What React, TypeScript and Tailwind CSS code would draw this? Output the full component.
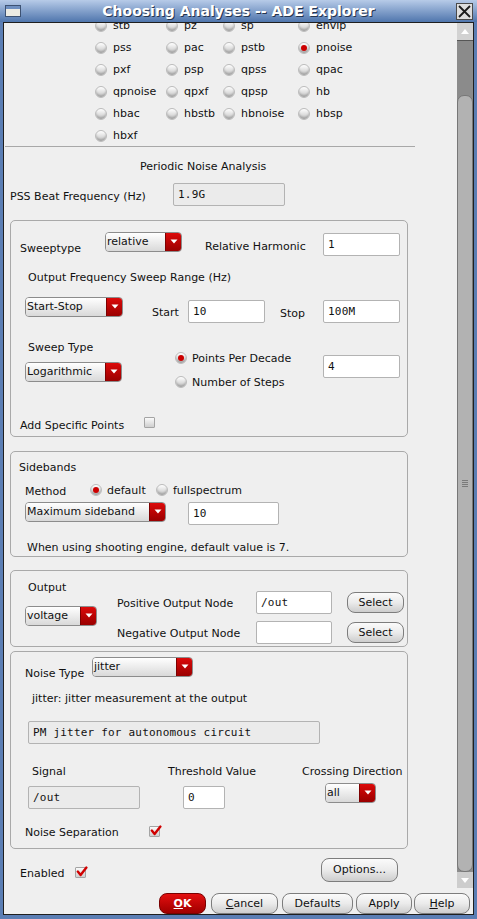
import React from "react";

type Kids = { children?: React.ReactNode; className?: string };

const Radio = ({ on = false }: { on?: boolean }) => (
  <span className="inline-flex h-[12px] w-[12px] shrink-0 items-center justify-center rounded-full border border-[#bcbcbc] bg-linear-to-b from-[#ffffff] to-[#c4c4c4] shadow-[inset_0_-2px_2px_rgba(0,0,0,0.18)]">
    {on && <span className="h-[6px] w-[6px] rounded-full bg-[#cc0000]" />}
  </span>
);

const Check = ({ on = false, className = "" }: { on?: boolean; className?: string }) => (
  <span
    className={`relative inline-block h-[11px] w-[11px] shrink-0 rounded-[1px] border border-[#a4a4a4] bg-linear-to-b from-[#fafafa] to-[#cfcfcf] ${className}`}
  >
    {on && (
      <svg className="absolute -top-[2px] left-0" width="12" height="12" viewBox="0 0 12 12">
        <path
          d="M1.8 5.6 L4.6 9 L10.4 1.6"
          stroke="#d00000"
          strokeWidth="2.4"
          fill="none"
          strokeLinecap="round"
          strokeLinejoin="round"
        />
      </svg>
    )}
  </span>
);

const Combo = ({ value, className = "" }: { value: string; className?: string }) => (
  <div
    className={`flex h-[20px] shrink-0 overflow-hidden rounded-[4px] border border-[#8c8c8c] ${className}`}
  >
    <div className="flex flex-1 items-center bg-linear-to-b from-[#ffffff] to-[#d9d9d9] pl-[1px]">
      {value}
    </div>
    <div className="flex w-[16px] items-center justify-center border-l border-[#7c0000] bg-linear-to-b from-[#dc0a0a] to-[#9a0000]">
      <svg width="8" height="5" viewBox="0 0 8 5" className="-mt-[2px]">
        <path d="M0.5 0.5h7L4 4.5z" fill="#ffffff" />
      </svg>
    </div>
  </div>
);

const Field = ({
  v = "",
  ro = false,
  className = "",
}: {
  v?: string;
  ro?: boolean;
  className?: string;
}) => (
  <div
    className={`flex h-[23px] shrink-0 items-center rounded-[2px] border border-[#b3b3b3] pl-[4px] font-['DejaVu_Sans_Mono',monospace] text-[11px] tracking-[0.2px] ${
      ro ? "bg-[#ebebeb]" : "bg-white"
    } ${className}`}
  >
    {v}
  </div>
);

const Btn = ({ children, className = "" }: Kids) => (
  <div
    className={`flex shrink-0 items-center justify-center rounded-[8px] border border-[#7d7d7d] bg-linear-to-b from-[#fbfbfb] via-[#ebebeb] to-[#cdcdcd] ${className}`}
  >
    {children}
  </div>
);

const Group = ({ children, className = "" }: Kids) => (
  <div className={`ml-[6px] w-[398px] shrink-0 rounded-[5px] border border-[#a9a9a9] ${className}`}>
    {children}
  </div>
);

const analyses = [
  ["stb", "pz", "sp", "envlp"],
  ["pss", "pac", "pstb", "pnoise"],
  ["pxf", "psp", "qpss", "qpac"],
  ["qpnoise", "qpxf", "qpsp", "hb"],
  ["hbac", "hbstb", "hbnoise", "hbsp"],
  ["hbxf"],
];

const Scrollbar = () => (
  <div className="flex w-[16px] shrink-0 flex-col bg-[#8b8b8b]">
    <div className="flex h-[18px] items-center justify-center border-b border-[#565656] bg-[#d2d2d2]">
      <svg width="8" height="5" viewBox="0 0 8 5">
        <path d="M0 5h8L4 0z" fill="#ffffff" />
      </svg>
    </div>
    <div className="h-[54px]" />
    <div className="flex flex-1 items-center justify-center rounded-[7px] border border-[#777777] bg-[#b2b2b2]">
      <div className="flex flex-col gap-[1px]">
        <span className="h-px w-[6px] bg-[#7a7a7a]" />
        <span className="h-px w-[6px] bg-[#7a7a7a]" />
        <span className="h-px w-[6px] bg-[#7a7a7a]" />
        <span className="h-px w-[6px] bg-[#7a7a7a]" />
      </div>
    </div>
    <div className="flex h-[16px] items-center justify-center bg-[#cdcdcd]">
      <svg width="8" height="5" viewBox="0 0 8 5">
        <path d="M0 0h8L4 5z" fill="#ffffff" />
      </svg>
    </div>
  </div>
);

export default function App() {
  return (
    <div className="flex h-[919px] w-[477px] flex-col overflow-hidden bg-[#5b7eb4] font-['DejaVu_Sans',sans-serif] text-[11px] leading-[14px] text-[#111111]">
      {/* title bar */}
      <div className="flex h-[22px] shrink-0 items-center bg-linear-to-b from-[#b7cbe8] to-[#5076ad]">
        <div className="ml-[5px] flex h-[12px] w-[16px] flex-col border border-[#3d5273] bg-[#ecebe3]">
          <span className="h-[3px] bg-[#6e8fc0]" />
        </div>
        <div className="flex-1 text-center text-[14px] font-bold leading-[22px] text-white [text-shadow:1px_1px_0_#26354f]">
          Choosing Analyses -- ADE Explorer
        </div>
        <div className="mr-[4px] flex h-[17px] w-[17px] items-center justify-center border border-[#4a4a4a] bg-[#dedede]">
          <svg width="13" height="13" viewBox="0 0 13 13">
            <path d="M1 1L12 12M12 1L1 12" stroke="#1c1c1c" strokeWidth="1.8" />
          </svg>
        </div>
      </div>

      {/* client area */}
      <div className="mx-[3px] mb-[4px] flex min-h-0 flex-1 flex-col border border-[#1f1f1f] bg-[#efefef]">
        <div className="flex min-h-0 flex-1">
          <div className="min-w-0 flex-1 overflow-hidden">
            <div className="-mt-[9px] flex flex-col">
              <div className="grid auto-rows-[22px] grid-cols-[71px_57px_75px_100px] pl-[91px]">
                {analyses.flat().map((a) => (
                  <div key={a} className="flex items-center gap-[6px] pt-[2px]">
                    <Radio on={a === "pnoise"} />
                    <span>{a}</span>
                  </div>
                ))}
              </div>
              <div className="ml-[1px] h-px w-[410px] bg-[#a8a8a8]" />

              <div className="flex h-[36px] items-center pl-[136px] pt-[4px]">Periodic Noise Analysis</div>

              <div className="flex h-[23px] items-center pl-[6px]">
                <span className="w-[163px] pt-[4px]">PSS Beat Frequency (Hz)</span>
                <Field v="1.9G" ro className="w-[112px]" />
              </div>

              {/* sweep group */}
              <Group className="mt-[14px] h-[217px]">
                <div className="mt-[11px] flex h-[24px] items-start pl-[9px]">
                  <span className="mt-[10px] w-[85px]">Sweeptype</span>
                  <Combo value="relative" className="w-[77px]" />
                  <span className="mt-[8px] w-[141px] pl-[23px]">Relative Harmonic</span>
                  <Field v="1" className="mt-[1px] w-[77px]" />
                </div>
                <div className="mt-[13px] h-[14px] pl-[17px] pt-[2px]">Output Frequency Sweep Range (Hz)</div>
                <div className="mt-[14px] flex h-[26px] items-start pl-[14px]">
                  <Combo value="Start-Stop" className="w-[98px]" />
                  <span className="mt-[9px] w-[65px] pl-[29px]">Start</span>
                  <Field v="10" className="mt-[3px] w-[77px]" />
                  <span className="mt-[10px] w-[58px] pl-[15px]">Stop</span>
                  <Field v="100M" className="mt-[3px] w-[77px]" />
                </div>
                <div className="mt-[16px] flex items-start pl-[14px]">
                  <div className="flex w-[150px] flex-col">
                    <span className="ml-[3px] h-[14px] pt-[2px]">Sweep Type</span>
                    <Combo value="Logarithmic" className="mt-[9px] w-[97px]" />
                  </div>
                  <div className="flex w-[148px] flex-col pt-[12px]">
                    <div className="flex h-[14px] items-center gap-[5px]">
                      <Radio on />
                      <span className="pt-[2px]">Points Per Decade</span>
                    </div>
                    <div className="mt-[10px] flex h-[14px] items-center gap-[5px]">
                      <Radio />
                      <span className="pt-[2px]">Number of Steps</span>
                    </div>
                  </div>
                  <Field v="4" className="mt-[16px] w-[77px]" />
                </div>
                <div className="mt-[28px] flex items-start pl-[9px]">
                  <span className="w-[124px] pt-[2px]">Add Specific Points</span>
                  <Check />
                </div>
              </Group>

              {/* sidebands */}
              <Group className="mt-[14px] h-[106px]">
                <div className="mt-[7px] h-[14px] pl-[8px] pt-[2px]">Sidebands</div>
                <div className="mt-[10px] flex h-[14px] items-center pl-[14px]">
                  <span className="w-[65px] pt-[4px]">Method</span>
                  <div className="flex w-[66px] items-center gap-[5px]">
                    <Radio on />
                    <span className="pt-[2px]">default</span>
                  </div>
                  <div className="flex items-center gap-[5px]">
                    <Radio />
                    <span className="pt-[2px]">fullspectrum</span>
                  </div>
                </div>
                <div className="mt-[5px] flex items-start pl-[14px]">
                  <Combo value="Maximum sideband" className="w-[141px]" />
                  <Field v="10" className="ml-[22px] w-[91px]" />
                </div>
                <div className="mt-[14px] h-[14px] pl-[16px] pt-[2px]">
                  When using shooting engine, default value is 7.
                </div>
              </Group>

              {/* output */}
              <Group className="mt-[13px] flex h-[77px]">
                <div className="flex w-[106px] flex-col pl-[14px]">
                  <span className="ml-[3px] mt-[8px] h-[14px] pt-[2px]">Output</span>
                  <Combo value="voltage" className="mt-[13px] w-[72px]" />
                </div>
                <div className="flex flex-col pt-[20px]">
                  <div className="flex h-[23px] items-center">
                    <span className="w-[139px] pt-[2px]">Positive Output Node</span>
                    <Field v="/out" className="w-[76px]" />
                    <Btn className="ml-[15px] h-[21px] w-[57px]">Select</Btn>
                  </div>
                  <div className="mt-[7px] flex h-[23px] items-center">
                    <span className="w-[139px] pt-[2px]">Negative Output Node</span>
                    <Field className="w-[76px]" />
                    <Btn className="ml-[15px] h-[21px] w-[57px]">Select</Btn>
                  </div>
                </div>
              </Group>

              {/* noise type */}
              <Group className="mt-[4px] h-[198px]">
                <div className="mt-[5px] flex items-start pl-[14px]">
                  <span className="mt-[10px] w-[67px]">Noise Type</span>
                  <Combo value="jitter" className="w-[101px]" />
                </div>
                <div className="mt-[9px] h-[14px] pl-[21px] pt-[2px]">jitter: jitter measurement at the output</div>
                <Field v="PM jitter for autonomous circuit" ro className="ml-[17px] mt-[17px] w-[292px]" />
                <div className="mt-[19px] flex h-[14px] pl-[21px] pt-[2px]">
                  <span className="w-[136px]">Signal</span>
                  <span className="w-[134px]">Threshold Value</span>
                  <span>Crossing Direction</span>
                </div>
                <div className="mt-[6px] flex items-start pl-[17px]">
                  <Field v="/out" ro className="mt-[3px] w-[112px]" />
                  <Field v="0" className="ml-[43px] mt-[3px] w-[42px]" />
                  <Combo value="all" className="ml-[100px] w-[51px]" />
                </div>
                <div className="mt-[15px] flex items-start pl-[14px]">
                  <span className="w-[124px] pt-[2px]">Noise Separation</span>
                  <Check on className="mt-[2px]" />
                </div>
              </Group>

              <div className="mt-[9px] flex items-start pl-[16px]">
                <span className="mt-[9px] w-[55px]">Enabled</span>
                <Check on className="mt-[9px]" />
                <Btn className="ml-[235px] h-[24px] w-[77px]">Options...</Btn>
              </div>
            </div>
          </div>
          <Scrollbar />
        </div>

        {/* dialog buttons */}
        <div className="flex h-[26px] shrink-0 items-start justify-end pr-[3px] pt-[5px]">
          <div className="flex h-[21px] w-[47px] items-center justify-center rounded-[8px] border border-[#7a0000] bg-linear-to-b from-[#e41010] to-[#a00000] font-bold text-white">
            <span>
              <span className="underline">O</span>K
            </span>
          </div>
          <Btn className="ml-[5px] h-[21px] w-[67px]">
            <span>
              <span className="underline">C</span>ancel
            </span>
          </Btn>
          <Btn className="ml-[4px] h-[21px] w-[71px]">Defaults</Btn>
          <Btn className="ml-[3px] h-[21px] w-[56px]">Apply</Btn>
          <Btn className="ml-[2px] h-[21px] w-[56px]">
            <span>
              <span className="underline">H</span>elp
            </span>
          </Btn>
        </div>
      </div>
    </div>
  );
}
